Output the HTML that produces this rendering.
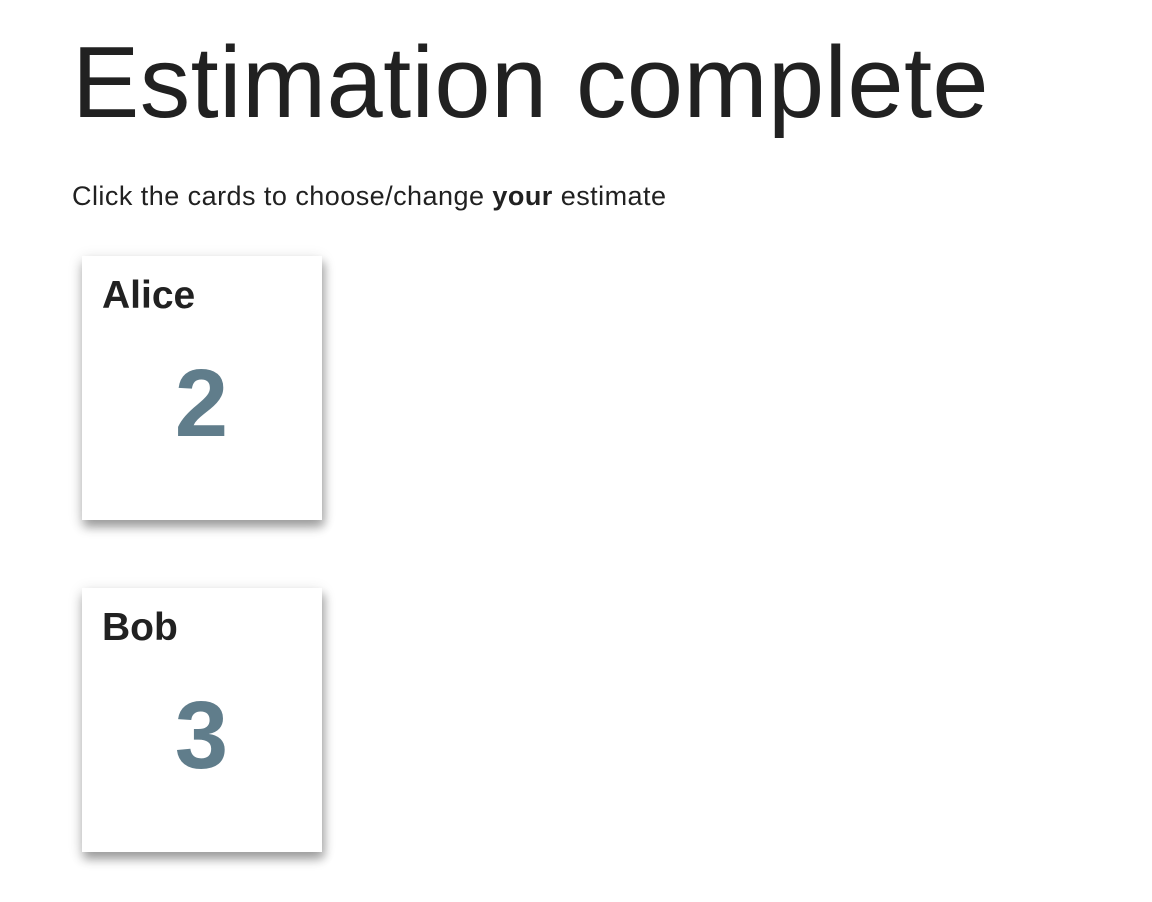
<!DOCTYPE html>
<html><head><meta charset="utf-8"><style>
body{margin:0;background:#fff;font-family:"Liberation Sans",sans-serif;color:#212121;width:1152px;height:902px;overflow:hidden;position:relative}
h1{position:absolute;left:72px;top:23px;margin:0;font-weight:normal;font-size:101px;line-height:120px;white-space:nowrap;letter-spacing:0.4px}
.sub{position:absolute;left:72px;top:180px;font-size:27px;line-height:32px;white-space:nowrap;letter-spacing:0.46px}
.card{position:absolute;left:82px;width:240px;height:264px;background:#fff;box-shadow:0 8px 10px rgba(0,0,0,.2),0 3px 14px rgba(0,0,0,.14),4px 6px 8px rgba(0,0,0,.15)}
.name{position:absolute;left:20px;top:17px;font-weight:bold;font-size:39px;line-height:46px}
.num{position:absolute;left:0;width:240px;text-align:center;top:92px;font-weight:bold;font-size:96px;line-height:112px;color:#607d8b;letter-spacing:1px}
</style></head><body>
<h1>Estimation complete</h1>
<div class="sub">Click the cards to choose/change <b>your</b> estimate</div>
<div class="card" style="top:256px"><div class="name">Alice</div><div class="num">2</div></div>
<div class="card" style="top:588px"><div class="name">Bob</div><div class="num">3</div></div>
</body></html>
